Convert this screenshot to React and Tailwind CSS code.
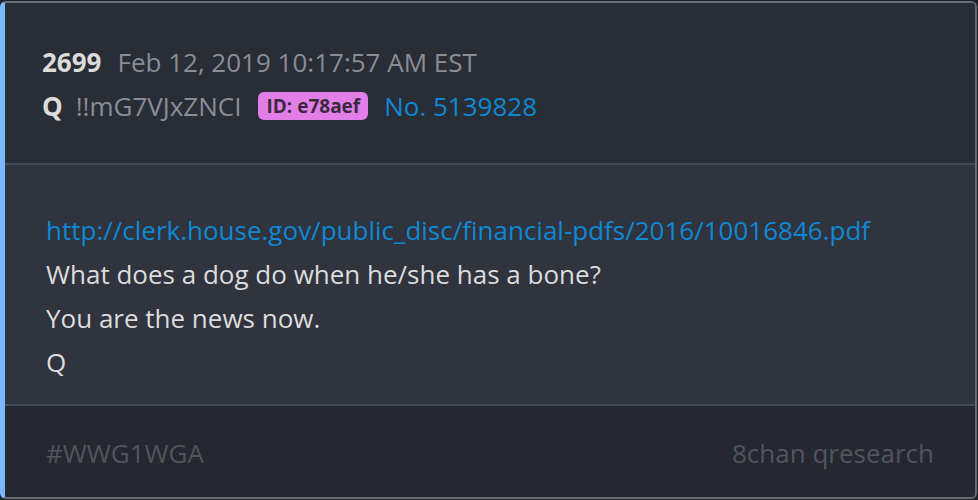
export default function App() {
  return (
    <div className="w-[978px] h-[500px] bg-[#1f2228] pt-[1px] pr-[1px] pb-[1px]" style={{ fontFamily: '"Open Sans", "Noto Sans", sans-serif' }}>
      <div className="h-full flex flex-col rounded-[6px] border-t-2 border-r-2 border-b-2 border-[#666b75] border-l-[5px] border-l-[#7ab8ff] overflow-hidden">
        <div className="h-[160px] bg-[#292d35] pl-[37px] pt-[37px] text-[26px]">
          <div className="flex items-center h-[44px]">
            <span className="font-bold text-[#dcdcdc]">2699</span>
            <span className="ml-[16px] text-[#888d98]">Feb 12, 2019 10:17:57 AM EST</span>
          </div>
          <div className="flex items-center h-[44px]">
            <span className="font-bold text-[#dcdcdc]">Q</span>
            <span className="ml-[13px] text-[#888d98]">!!mG7VJxZNCI</span>
            <span className="ml-[17px] h-[28px] px-[8px] rounded-[6px] bg-[#e27ee8] text-[#3b2a3e] font-bold text-[19px] flex items-center">ID: e78aef</span>
            <span className="ml-[16px] text-[#0f88d4]">No. 5139828</span>
          </div>
        </div>
        <div className="h-[2px] bg-[#454b56]"></div>
        <div className="h-[239px] bg-[#2f343e] pl-[41px] pt-[43px] text-[26px] leading-[44px] text-[#dcdcdc]">
          <div className="text-[#0f88d4]">http://clerk.house.gov/public_disc/financial-pdfs/2016/10016846.pdf</div>
          <div>What does a dog do when he/she has a bone?</div>
          <div>You are the news now.</div>
          <div>Q</div>
        </div>
        <div className="h-[2px] bg-[#454b56]"></div>
        <div className="flex-1 bg-[#252830] pl-[41px] pr-[41px] pt-[3px] flex items-center justify-between text-[26px] text-[#50555f]">
          <span>#WWG1WGA</span>
          <span>8chan qresearch</span>
        </div>
      </div>
    </div>
  );
}
